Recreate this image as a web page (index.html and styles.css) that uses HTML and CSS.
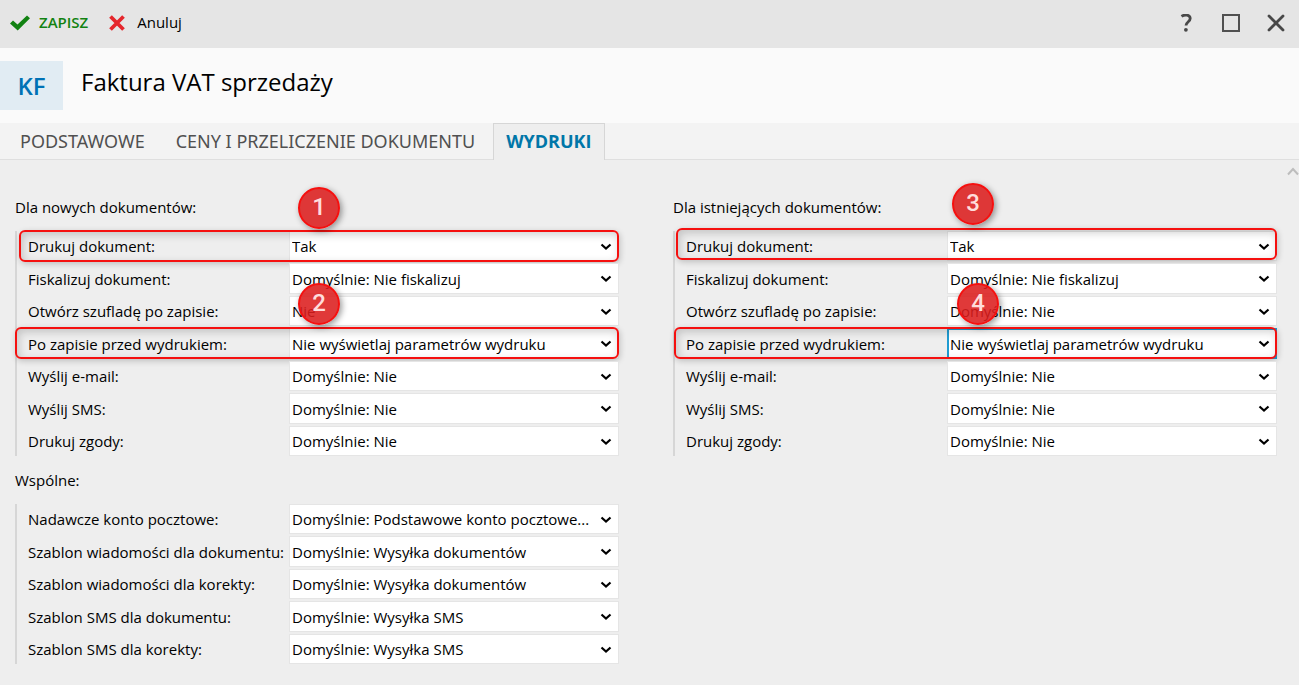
FILE: index.html
```html
<!DOCTYPE html>
<html lang="pl">
<head>
  <meta charset="UTF-8" />
  <title>Faktura VAT sprzedaży</title>
  <link rel="stylesheet" href="styles.css">
</head>
<body>
  <svg class="symbols" aria-hidden="true">
    <symbol id="arrow" viewBox="0 0 12 8">
      <path d="M1.5 1.5L6 5.6L10.5 1.5" fill="none" stroke="#000" stroke-width="2.2" />
    </symbol>
  </svg>

  <header class="toolbar">
    <button class="tool-btn save-btn" type="button">
      <svg width="21" height="16" viewBox="0 0 21 16"><path d="M0 8.5L3 5.5L7.5 9.5L17 0.5L20 3.2L7.7 15.5Z" fill="#128212" /></svg>
      <span>ZAPISZ</span>
    </button>
    <button class="tool-btn cancel-btn" type="button">
      <svg width="16" height="16" viewBox="0 0 16 16"><path d="M1.5 1.5L14.5 14.5M14.5 1.5L1.5 14.5" stroke="#e5262c" stroke-width="3.8" /></svg>
      <span>Anuluj</span>
    </button>
    <div class="window-buttons">
      <button type="button" aria-label="Pomoc">
        <svg width="18" height="18" viewBox="0 0 18 18"><path d="M4.5 2.4C8 0 13.2 0.7 13.2 4.6C13.2 7.7 9 7.8 9 11.6" fill="none" stroke="#484848" stroke-width="2.8" /><circle cx="8.9" cy="15.8" r="1.9" fill="#484848" /></svg>
      </button>
      <button type="button" aria-label="Maksymalizuj">
        <svg width="18" height="18" viewBox="0 0 18 18"><rect x="1" y="1" width="16" height="16" fill="none" stroke="#505050" stroke-width="2" /></svg>
      </button>
      <button type="button" aria-label="Zamknij">
        <svg width="18" height="18" viewBox="0 0 18 18"><path d="M2 2L16 16M16 2L2 16" stroke="#484848" stroke-width="2.8" stroke-linecap="round" /></svg>
      </button>
    </div>
  </header>

  <div class="title-bar">
    <div class="doc-code">KF</div>
    <h1>Faktura VAT sprzedaży</h1>
  </div>

  <nav class="tabs">
    <a href="#podstawowe">PODSTAWOWE</a>
    <a href="#ceny">CENY I PRZELICZENIE DOKUMENTU</a>
    <a href="#wydruki" class="active">WYDRUKI</a>
  </nav>

  <main class="content">
    <svg class="scroll-up" width="12" height="9" viewBox="0 0 12 9"><path d="M1 7.5L6 2L11 7.5" fill="none" stroke="#bdbdbd" stroke-width="2" /></svg>

    <section class="new-docs">
      <h2>Dla nowych dokumentów:</h2>
      <div class="group">
        <div class="row">
          <label for="n1">Drukuj dokument:</label>
          <div class="field"><select id="n1"><option>Tak</option></select><svg class="arrow"><use href="#arrow" /></svg></div>
          <span class="mark mark-1"></span>
          <span class="badge badge-1">1</span>
        </div>
        <div class="row">
          <label for="n2">Fiskalizuj dokument:</label>
          <div class="field"><select id="n2"><option>Domyślnie: Nie fiskalizuj</option></select><svg class="arrow"><use href="#arrow" /></svg></div>
        </div>
        <div class="row">
          <label for="n3">Otwórz szufladę po zapisie:</label>
          <div class="field"><select id="n3"><option>Nie</option></select><svg class="arrow"><use href="#arrow" /></svg></div>
        </div>
        <div class="row">
          <label for="n4">Po zapisie przed wydrukiem:</label>
          <div class="field"><select id="n4"><option>Nie wyświetlaj parametrów wydruku</option></select><svg class="arrow"><use href="#arrow" /></svg></div>
          <span class="mark mark-2"></span>
          <span class="badge badge-2">2</span>
        </div>
        <div class="row">
          <label for="n5">Wyślij e-mail:</label>
          <div class="field"><select id="n5"><option>Domyślnie: Nie</option></select><svg class="arrow"><use href="#arrow" /></svg></div>
        </div>
        <div class="row">
          <label for="n6">Wyślij SMS:</label>
          <div class="field"><select id="n6"><option>Domyślnie: Nie</option></select><svg class="arrow"><use href="#arrow" /></svg></div>
        </div>
        <div class="row">
          <label for="n7">Drukuj zgody:</label>
          <div class="field"><select id="n7"><option>Domyślnie: Nie</option></select><svg class="arrow"><use href="#arrow" /></svg></div>
        </div>
      </div>
    </section>

    <section class="existing-docs">
      <h2>Dla istniejących dokumentów:</h2>
      <div class="group">
        <div class="row">
          <label for="e1">Drukuj dokument:</label>
          <div class="field"><select id="e1"><option>Tak</option></select><svg class="arrow"><use href="#arrow" /></svg></div>
          <span class="mark mark-3"></span>
          <span class="badge badge-3">3</span>
        </div>
        <div class="row">
          <label for="e2">Fiskalizuj dokument:</label>
          <div class="field"><select id="e2"><option>Domyślnie: Nie fiskalizuj</option></select><svg class="arrow"><use href="#arrow" /></svg></div>
        </div>
        <div class="row">
          <label for="e3">Otwórz szufladę po zapisie:</label>
          <div class="field"><select id="e3"><option>Domyślnie: Nie</option></select><svg class="arrow"><use href="#arrow" /></svg></div>
        </div>
        <div class="row">
          <label for="e4">Po zapisie przed wydrukiem:</label>
          <div class="field focused"><select id="e4"><option>Nie wyświetlaj parametrów wydruku</option></select><svg class="arrow"><use href="#arrow" /></svg></div>
          <span class="mark mark-4"></span>
          <span class="badge badge-4">4</span>
        </div>
        <div class="row">
          <label for="e5">Wyślij e-mail:</label>
          <div class="field"><select id="e5"><option>Domyślnie: Nie</option></select><svg class="arrow"><use href="#arrow" /></svg></div>
        </div>
        <div class="row">
          <label for="e6">Wyślij SMS:</label>
          <div class="field"><select id="e6"><option>Domyślnie: Nie</option></select><svg class="arrow"><use href="#arrow" /></svg></div>
        </div>
        <div class="row">
          <label for="e7">Drukuj zgody:</label>
          <div class="field"><select id="e7"><option>Domyślnie: Nie</option></select><svg class="arrow"><use href="#arrow" /></svg></div>
        </div>
      </div>
    </section>

    <section class="common">
      <h2>Wspólne:</h2>
      <div class="group">
        <div class="row">
          <label for="c1">Nadawcze konto pocztowe:</label>
          <div class="field"><select id="c1"><option>Domyślnie: Podstawowe konto pocztowe...</option></select><svg class="arrow"><use href="#arrow" /></svg></div>
        </div>
        <div class="row">
          <label for="c2">Szablon wiadomości dla dokumentu:</label>
          <div class="field"><select id="c2"><option>Domyślnie: Wysyłka dokumentów</option></select><svg class="arrow"><use href="#arrow" /></svg></div>
        </div>
        <div class="row">
          <label for="c3">Szablon wiadomości dla korekty:</label>
          <div class="field"><select id="c3"><option>Domyślnie: Wysyłka dokumentów</option></select><svg class="arrow"><use href="#arrow" /></svg></div>
        </div>
        <div class="row">
          <label for="c4">Szablon SMS dla dokumentu:</label>
          <div class="field"><select id="c4"><option>Domyślnie: Wysyłka SMS</option></select><svg class="arrow"><use href="#arrow" /></svg></div>
        </div>
        <div class="row">
          <label for="c5">Szablon SMS dla korekty:</label>
          <div class="field"><select id="c5"><option>Domyślnie: Wysyłka SMS</option></select><svg class="arrow"><use href="#arrow" /></svg></div>
        </div>
      </div>
    </section>
  </main>
</body>
</html>
```
FILE: styles.css
```css
* { box-sizing: border-box; }

body {
  margin: 0;
  min-height: 100vh;
  background: #eeeeee;
  color: #000;
  font-family: "Open Sans", "Noto Sans", sans-serif;
  font-size: 15px;
  line-height: 20px;
}

h1, h2 {
  margin: 0;
  font-weight: normal;
}

button {
  padding: 0;
  border: none;
  background: none;
  color: inherit;
  font: inherit;
  cursor: pointer;
}

.symbols {
  position: absolute;
  width: 0;
  height: 0;
}

/* Top toolbar */
.toolbar {
  display: flex;
  align-items: center;
  gap: 21px;
  height: 48px;
  padding: 0 14px 2px 10px;
  background: #e5e5e5;
}

.tool-btn {
  display: flex;
  align-items: center;
  gap: 8px;
}

.tool-btn span { padding-bottom: 2px; }

.save-btn {
  color: #128212;
  font-weight: 600;
}

.cancel-btn { gap: 12px; }

.window-buttons {
  display: flex;
  gap: 27px;
  margin-left: auto;
}

.window-buttons svg { display: block; }

/* Document title */
.title-bar {
  display: flex;
  align-items: center;
  gap: 18px;
  height: 75px;
  background: #fafafa;
}

.doc-code {
  width: 63px;
  background: #e1ecf3;
  color: #0072b5;
  font-size: 24px;
  font-weight: 600;
  line-height: 49px;
  text-align: center;
}

h1 {
  padding-bottom: 8px;
  font-size: 24px;
  line-height: 32px;
}

/* Tabs */
.tabs {
  display: flex;
  gap: 5px;
  height: 37px;
  padding-left: 7px;
  background: #f3f3f3;
  border-bottom: 1px solid #dfdfdf;
}

.tabs a {
  padding: 0 13px;
  color: #505050;
  font-family: "Noto Sans", "Open Sans", sans-serif;
  font-size: 18px;
  line-height: 37px;
  text-decoration: none;
}

.tabs .active {
  height: 37px;
  padding: 0 12px;
  background: #eeeeee;
  border: 1px solid #d6d6d6;
  border-bottom: none;
  color: #0076a8;
  font-family: "Open Sans", "Noto Sans", sans-serif;
  font-weight: bold;
  line-height: 35px;
}

/* Settings */
.content {
  position: relative;
  display: grid;
  grid-template-columns: 1fr 1fr;
  gap: 14px 54px;
  padding: 37px 22px 20px 15px;
}

.scroll-up {
  position: absolute;
  top: 7px;
  right: 0;
}

.common { grid-column: 1; }

h2 {
  margin-bottom: 14px;
  font-size: 15px;
  line-height: 20px;
}

.group {
  display: flex;
  flex-direction: column;
  gap: 2px;
  border-left: 2px solid #d6d6d6;
}

.row {
  position: relative;
  display: grid;
  grid-template-columns: 272px 1fr;
  align-items: center;
  height: 30px;
}

.row:nth-child(even) { height: 31px; }

.row label {
  padding-left: 11px;
  white-space: nowrap;
}

.field {
  position: relative;
  height: 100%;
}

.field select {
  width: 100%;
  height: 100%;
  padding: 0 20px 0 2px;
  appearance: none;
  background: #fff;
  border: 1px solid #e5e5e5;
  border-radius: 0;
  color: #000;
  font: inherit;
  text-overflow: ellipsis;
}

.field.focused select {
  padding-left: 1px;
  border: 2px solid #1f9bd1;
}

.arrow {
  position: absolute;
  top: 12px;
  right: 7px;
  width: 12px;
  height: 8px;
  pointer-events: none;
}

/* Numbered marks over the form */
.mark {
  position: absolute;
  top: -1px;
  right: 0;
  height: 32px;
  border: 2px solid #f5100f;
  border-radius: 6px;
  box-shadow: 1px 2px 6px rgba(0, 0, 0, 0.2), inset 2px 3px 8px rgba(0, 0, 0, 0.18);
  pointer-events: none;
}

.mark-1 { left: 2px; }
.mark-2 { left: -2px; }
.mark-3 { left: 1px; top: -3px; }
.mark-4 { left: -1px; }

.badge {
  position: absolute;
  z-index: 1;
  width: 42px;
  height: 42px;
  background: rgba(220, 30, 30, 0.88);
  border: 2px solid #f5100f;
  border-radius: 50%;
  box-shadow: 2px 2px 6px rgba(0, 0, 0, 0.4);
  color: #ffdcdc;
  font-family: Roboto, "Liberation Sans", sans-serif;
  font-size: 24px;
  font-weight: 500;
  line-height: 37px;
  text-align: center;
}

.badge-1 { left: 281px; top: -44px; }
.badge-2 { left: 281px; top: -45px; }
.badge-3 { left: 277px; top: -48px; }
.badge-4 { left: 282px; top: -45px; }
```
